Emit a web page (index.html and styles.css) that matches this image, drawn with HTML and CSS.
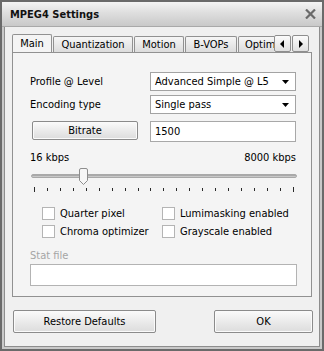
FILE: index.html
```html
<!DOCTYPE html>
<html>
<head>
<meta charset="utf-8">
<link rel="stylesheet" href="styles.css">
</head>
<body>
<div class="window">
  <div class="titlebar">
    <span class="title">MPEG4 Settings</span>
    <svg class="close" width="11" height="10" viewBox="0 0 11 10"><path d="M1 0.5 L10 9.5 M10 0.5 L1 9.5" stroke="#6a6a6a" stroke-width="2.2" fill="none"/></svg>
  </div>
  <div class="frame">
    <div class="body">
      <div class="tabstrip">
        <div class="tabs">
          <div class="tab active w-main">Main</div>
          <div class="tab w-quant">Quantization</div>
          <div class="tab w-motion">Motion</div>
          <div class="tab w-bvop">B-VOPs</div>
          <div class="tab w-optim">Optim</div>
        </div>
        <div class="arrows">
          <div class="arrow"><svg width="5" height="8" viewBox="0 0 5 8"><path d="M4 0 L0 4 L4 8 Z" fill="#000"/></svg></div>
          <div class="arrow"><svg width="5" height="8" viewBox="0 0 5 8"><path d="M1 0 L5 4 L1 8 Z" fill="#000"/></svg></div>
        </div>
      </div>
      <div class="panel">
        <div class="form">
          <div class="label">Profile @ Level</div>
          <div class="select"><span>Advanced Simple @ L5</span><svg width="7" height="4" viewBox="0 0 7 4"><path d="M0 0 L7 0 L3.5 4 Z" fill="#000"/></svg></div>
          <div class="label">Encoding type</div>
          <div class="select"><span>Single pass</span><svg width="7" height="4" viewBox="0 0 7 4"><path d="M0 0 L7 0 L3.5 4 Z" fill="#000"/></svg></div>
          <div class="btn bitrate">Bitrate</div>
          <div class="input">1500</div>
        </div>
        <div class="range-labels"><span>16 kbps</span><span>8000 kbps</span></div>
        <div class="slider">
          <div class="track"></div>
          <svg class="thumb" width="9" height="17" viewBox="0 0 9 17"><path d="M0.5 2 Q0.5 0.5 2 0.5 L7 0.5 Q8.5 0.5 8.5 2 L8.5 12.5 L4.5 16.5 L0.5 12.5 Z" fill="#f7f7f7" stroke="#8e8e8e"/></svg>
        </div>
        <div class="ticks">
          <i class="long"></i><i></i><i></i><i></i><i></i><i></i><i></i><i></i><i></i><i></i><i></i><i></i><i></i><i></i><i></i><i></i><i></i><i></i><i></i><i></i><i class="long"></i>
        </div>
        <div class="checks">
          <label class="check"><span class="box"></span>Quarter pixel</label>
          <label class="check"><span class="box"></span>Lumimasking enabled</label>
          <label class="check"><span class="box"></span>Chroma optimizer</label>
          <label class="check"><span class="box"></span>Grayscale enabled</label>
        </div>
        <div class="stat-label">Stat file</div>
        <div class="input stat"></div>
      </div>
      <div class="footer">
        <div class="btn restore">Restore Defaults</div>
        <div class="btn ok">OK</div>
      </div>
    </div>
  </div>
</div>
</body>
</html>
```

FILE: styles.css
```css
html, body {
  margin: 0;
  padding: 0;
  background: #ffffff;
}
body {
  font-family: "DejaVu Sans Condensed", "DejaVu Sans", sans-serif;
  font-size: 11px;
  color: #000;
}
.window {
  width: 324px;
  height: 351px;
  box-sizing: border-box;
  border: 2px solid #6a6a6a;
  background: #d9d9d9;
  display: flex;
  flex-direction: column;
}
.titlebar {
  height: 25px;
  flex: none;
  display: flex;
  align-items: center;
  justify-content: space-between;
  padding: 0 6px 0 8px;
  background: linear-gradient(#f4f4f4, #dedede 45%, #c9c9c9);
  border-bottom: 1px solid #a9a9a9;
  box-sizing: border-box;
}
.title {
  font-weight: bold;
  font-size: 11px;
  color: #111;
  padding-top: 1px;
}
.close {
  margin-top: -1px;
}
.frame {
  flex: 1;
  border: 2px solid #c9c9c9;
  border-top: none;
  display: flex;
}
.body {
  flex: 1;
  background: #f0f0f0;
  border: 1px solid #8d8d8d;
  border-top: none;
  padding: 7px 6px 0 7px;
  display: flex;
  flex-direction: column;
}
.tabstrip {
  display: flex;
  height: 18px;
  position: relative;
  z-index: 2;
}
.tabs {
  display: flex;
  width: 262px;
  overflow: hidden;
  align-items: flex-end;
}
.tab {
  flex: none;
  height: 16px;
  box-sizing: border-box;
  border: 1px solid #919191;
  border-bottom: none;
  border-radius: 2px 2px 0 0;
  background: linear-gradient(#f6f6f6, #dcdcdc);
  text-align: center;
  line-height: 15px;
  margin-right: 1px;
  white-space: nowrap;
}
.tab.active {
  height: 19px;
  margin-bottom: -1px;
  background: #f4f4f4;
  line-height: 18px;
  padding-bottom: 1px;
}
.w-main { width: 40px; }
.w-quant { width: 80px; }
.w-motion { width: 50px; }
.w-bvop { width: 52px; }
.w-optim { width: 50px; text-align: left; padding-left: 6px; }
.arrows {
  display: flex;
  gap: 1px;
  margin-top: 1px;
}
.arrow {
  width: 17px;
  height: 17px;
  box-sizing: border-box;
  border: 1px solid #8e8e8e;
  border-radius: 2px;
  background: linear-gradient(#fbfbfb, #e0e0e0);
  display: flex;
  align-items: center;
  justify-content: center;
}
.panel {
  width: 300px;
  height: 245px;
  box-sizing: border-box;
  border: 1px solid #919191;
  background: #f4f4f4;
  padding: 19px 15px 0 17px;
  display: flex;
  flex-direction: column;
}
.form {
  display: grid;
  grid-template-columns: 120px 1fr;
  grid-template-rows: 19px 19px 21px;
  row-gap: 4px;
  align-items: center;
}
.form .label {
  line-height: 19px;
}
.select {
  height: 19px;
  box-sizing: border-box;
  border: 1px solid #a3a3a3;
  background: #fff;
  display: flex;
  align-items: center;
  justify-content: space-between;
  padding: 0 6px 0 4px;
}
.select svg { margin-top: 1px; }
.btn {
  box-sizing: border-box;
  border: 1px solid #8b8b8b;
  border-radius: 2px;
  background: linear-gradient(#fbfbfb, #ebebeb 50%, #dcdcdc);
  text-align: center;
  box-shadow: inset 0 0 0 1px #fafafa;
}
.bitrate {
  margin: 0 12px 0 2px;
  height: 19px;
  line-height: 17px;
}
.form > .btn.bitrate { align-self: start; margin-top: 3px; }
.input {
  height: 21px;
  box-sizing: border-box;
  border: 1px solid #a8a8a8;
  background: #fff;
  padding: 0 4px;
  line-height: 19px;
}
.form .input { margin-top: 6px; }
.range-labels {
  display: flex;
  justify-content: space-between;
  margin-top: 12px;
  line-height: 13px;
  padding-right: 0;
}
.slider {
  position: relative;
  height: 17px;
  margin-top: 4px;
}
.track {
  position: absolute;
  left: 1px;
  right: -1px;
  top: 6px;
  height: 4px;
  box-sizing: border-box;
  border: 1px solid #a9a9a9;
  border-radius: 2px;
  background: linear-gradient(#9a9a9a, #d8d8d8);
}
.thumb {
  position: absolute;
  left: 49px;
  top: 0;
}
.ticks {
  display: flex;
  justify-content: space-between;
  align-items: flex-start;
  margin: 2px 2px 0 4px;
  height: 5px;
}
.ticks i {
  display: block;
  width: 1px;
  height: 3px;
  background: #2a2a2a;
  margin-top: 1px;
}
.ticks i.long {
  height: 5px;
  margin-top: 0;
}
.checks {
  display: grid;
  grid-template-columns: 120px 1fr;
  grid-auto-rows: 18px;
  padding-left: 12px;
  margin-top: 12px;
}
.check {
  display: flex;
  align-items: center;
  gap: 5px;
}
.box {
  width: 13px;
  height: 13px;
  box-sizing: border-box;
  border: 1px solid #b4b4b4;
  background: #fff;
  flex: none;
}
.stat-label {
  color: #a5a5a5;
  margin-top: 9px;
  line-height: 13px;
}
.input.stat {
  margin-top: 2px;
  height: 22px;
  width: 267px;
  border-color: #b3b3b3;
}
.footer {
  display: flex;
  justify-content: space-between;
  margin-top: 13px;
}
.footer .btn {
  height: 23px;
  line-height: 21px;
}
.restore { width: 143px; margin-left: 1px; }
.ok { width: 99px; }
```
